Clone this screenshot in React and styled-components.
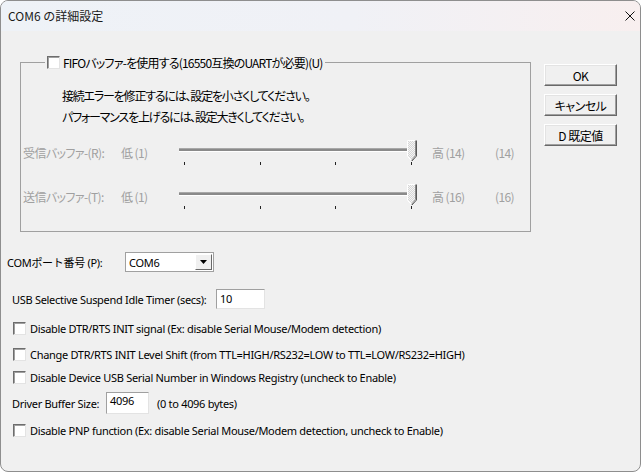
import React from "react";
import styled, { createGlobalStyle } from "styled-components";

const Global = createGlobalStyle`
  html, body { margin: 0; padding: 0; background: #ffffff; }
  body { width: 641px; height: 472px; overflow: hidden; }
`;

const UI = `"Noto Sans", "Noto Sans CJK JP", sans-serif`;
const JP = `"Noto Sans CJK JP", "Noto Sans", sans-serif`;

const Window = styled.div`
  box-sizing: border-box;
  width: 641px;
  height: 472px;
  border: 1px solid #8e8e8e;
  border-radius: 8px;
  overflow: hidden;
  background: #f0f0f0;
  display: flex;
  flex-direction: column;
  font-family: ${UI};
  font-size: 11px;
  letter-spacing: -0.3px;
  color: #000;
`;

const TitleBar = styled.div`
  flex: none;
  height: 30px;
  display: flex;
  align-items: center;
  justify-content: space-between;
  padding: 0 5px 0 7px;
  background: linear-gradient(90deg, #eef2f7 0%, #f0f1f6 55%, #f8efef 100%);
`;

const Title = styled.span`
  font-family: ${JP};
  font-size: 12px;
  letter-spacing: 0;
  line-height: 16px;
  color: #1a1a1a;
`;

const Body = styled.div`
  flex: 1;
  display: flex;
  flex-direction: column;
  padding-top: 25px;
`;

const TopRow = styled.div`
  display: flex;
  align-items: flex-start;
  padding-left: 19px;
`;

const GroupBox = styled.fieldset`
  box-sizing: border-box;
  width: 511px;
  margin: 0;
  padding: 0 0 3px 0;
  border: 1px solid #a0a0a0;
  min-inline-size: 0;
`;

const Legend = styled.legend`
  margin-left: 24px;
  padding: 0 2px;
  height: 13px;
  display: flex;
  align-items: center;
  gap: 3px;
  font-family: ${JP};
  font-feature-settings: "palt";
  font-size: 12px;
  letter-spacing: -0.8px;
  line-height: 13px;
`;

const Intro = styled.div`
  margin-top: 19px;
  padding-left: 41px;
  display: flex;
  flex-direction: column;
  gap: 5px;
  font-family: ${JP};
  font-feature-settings: "palt";
  font-size: 12px;
  letter-spacing: -1.2px;
  line-height: 16px;
`;

const SliderRow = styled.div`
  display: grid;
  grid-template-columns: 98px 58px 237px 16px 63px auto;
  height: 44px;
  padding-left: 2px;
  margin-top: ${(p) => p.$top || 0}px;
  font-family: ${JP};
  font-feature-settings: "palt";
  font-size: 12px;
  letter-spacing: -0.6px;
  line-height: 16px;
  color: #a0a0a0;
`;

const Dim = styled.span`
  padding-top: 5px;
  white-space: nowrap;
`;

const SliderBox = styled.div`
  position: relative;
  height: 26px;
`;

const Track = styled.div`
  margin-top: 8px;
  width: 232px;
  height: 2px;
  background: #8a8a8a;
  border-top: 1px solid #a8a8a8;
  border-bottom: 1px solid #ffffff;
`;

const Ticks = styled.div`
  display: flex;
  justify-content: space-between;
  width: 228px;
  margin: 10px 0 0 5px;
`;

const Tick = styled.span`
  width: 1px;
  height: 3px;
  background: #222;
`;

const Thumb = styled.svg`
  position: absolute;
  left: 228px;
  top: 0;
`;

const ButtonColumn = styled.div`
  margin: 8px 0 0 13px;
  display: flex;
  flex-direction: column;
  gap: 8px;
`;

const Button = styled.button`
  box-sizing: border-box;
  width: 73px;
  height: 22px;
  padding: 0;
  background: #f0f0f0;
  border: 1px solid;
  border-color: #ffffff #696969 #696969 #ffffff;
  box-shadow: inset -1px -1px 0 #a0a0a0, inset 1px 1px 0 #e3e3e3;
  font-family: ${JP};
  font-feature-settings: "palt";
  font-size: 12px;
  letter-spacing: -0.5px;
  color: #000;
`;

const FormRow = styled.div`
  display: flex;
  align-items: center;
  height: ${(p) => p.$h || 20}px;
  margin-top: ${(p) => p.$top || 0}px;
  padding-left: ${(p) => p.$left || 11}px;
  white-space: nowrap;
`;

const Label = styled.span`
  flex: none;
  width: ${(p) => (p.$w ? `${p.$w}px` : "auto")};
`;

const Select = styled.div`
  box-sizing: border-box;
  width: 89px;
  height: 20px;
  display: flex;
  align-items: center;
  background: #fff;
  border: 1px solid #a0a0a0;
  padding: 1px;
`;

const SelectValue = styled.span`
  flex: 1;
  padding-left: 2px;
`;

const DropButton = styled.span`
  box-sizing: border-box;
  width: 17px;
  height: 16px;
  display: flex;
  align-items: center;
  justify-content: center;
  background: #f0f0f0;
  border: 1px solid;
  border-color: #ffffff #696969 #696969 #ffffff;
`;

const TextBox = styled.div`
  box-sizing: border-box;
  flex: none;
  width: ${(p) => p.$w}px;
  height: ${(p) => p.$h || 20}px;
  background: #fff;
  border: 1px solid;
  border-color: #a0a0a0 #e3e3e3 #e3e3e3 #a0a0a0;
  padding: ${(p) => (p.$tight ? "0 3px" : "1px 3px")};
  line-height: 16px;
`;

const Box = styled.span`
  box-sizing: border-box;
  flex: none;
  width: 13px;
  height: 13px;
  background: #fff;
  border: 1px solid;
  border-color: #6d6d6d #e3e3e3 #e3e3e3 #6d6d6d;
  box-shadow: inset 1px 1px 0 #a0a0a0;
`;

const CheckRow = styled(FormRow)`
  gap: 4px;
`;

const Note = styled.span`
  margin-left: 8px;
`;

function CheckBox() {
  return <Box />;
}

function Slider() {
  return (
    <SliderBox>
      <Track />
      <Ticks>
        <Tick />
        <Tick />
        <Tick />
        <Tick />
      </Ticks>
      <Thumb width="10" height="22" viewBox="0 0 10 22">
        <defs>
          <pattern id="dots" width="2" height="2" patternUnits="userSpaceOnUse">
            <rect width="2" height="2" fill="#f4f4f4" />
            <rect width="1" height="1" fill="#d6d6d6" />
            <rect x="1" y="1" width="1" height="1" fill="#d6d6d6" />
          </pattern>
        </defs>
        <path d="M0.5 0.5 H8.5 V15.5 L4.5 20.5 L0.5 16.5 Z" fill="url(#dots)" stroke="#ffffff" />
        <path d="M8.5 0.5 V15.5 L4.5 20.5" fill="none" stroke="#8a8a8a" />
        <path d="M9.5 0.5 V16 L5 21" fill="none" stroke="#5a5a5a" />
      </Thumb>
    </SliderBox>
  );
}

export default function App() {
  return (
    <>
      <Global />
      <Window>
        <TitleBar>
          <Title>COM6 の詳細設定</Title>
          <svg width="10" height="10" viewBox="0 0 10 10">
            <path d="M0.5 0.5 L9.5 9.5 M9.5 0.5 L0.5 9.5" stroke="#111" strokeWidth="1" />
          </svg>
        </TitleBar>
        <Body>
          <TopRow>
            <GroupBox>
              <Legend>
                <CheckBox />
                <span>FIFOバッファ-を使用する(16550互換のUARTが必要)(U)</span>
              </Legend>
              <Intro>
                <span>接続エラーを修正するには、設定を小さくしてください。</span>
                <span>パフォーマンスを上げるには、設定大きくしてください。</span>
              </Intro>
              <SliderRow $top={15}>
                <Dim>受信バッファ-(R):</Dim>
                <Dim>低 (1)</Dim>
                <Slider />
                <span />
                <Dim>高 (14)</Dim>
                <Dim>(14)</Dim>
              </SliderRow>
              <SliderRow>
                <Dim>送信バッファ-(T):</Dim>
                <Dim>低 (1)</Dim>
                <Slider />
                <span />
                <Dim>高 (16)</Dim>
                <Dim>(16)</Dim>
              </SliderRow>
            </GroupBox>
            <ButtonColumn>
              <Button>OK</Button>
              <Button>キャンセル</Button>
              <Button>D 既定値</Button>
            </ButtonColumn>
          </TopRow>

          <FormRow $top={20} $left={6}>
            <Label $w={118}>COMポート番号 (P):</Label>
            <Select>
              <SelectValue>COM6</SelectValue>
              <DropButton>
                <svg width="7" height="4" viewBox="0 0 7 4">
                  <path d="M0 0 H7 L3.5 4 Z" fill="#000" />
                </svg>
              </DropButton>
            </Select>
          </FormRow>

          <FormRow $top={17}>
            <Label $w={204}>USB Selective Suspend Idle Timer (secs):</Label>
            <TextBox $w={49}>10</TextBox>
          </FormRow>

          <CheckRow $top={13} $h={13} $left={12}>
            <CheckBox />
            <span>Disable DTR/RTS INIT signal (Ex: disable Serial Mouse/Modem detection)</span>
          </CheckRow>

          <CheckRow $top={13} $h={13} $left={12}>
            <CheckBox />
            <span>Change DTR/RTS INIT Level Shift (from TTL=HIGH/RS232=LOW to TTL=LOW/RS232=HIGH)</span>
          </CheckRow>

          <CheckRow $top={10} $h={13} $left={12}>
            <CheckBox />
            <span>Disable Device USB Serial Number in Windows Registry (uncheck to Enable)</span>
          </CheckRow>

          <FormRow $top={8} $h={22}>
            <Label $w={94}>Driver Buffer Size:</Label>
            <TextBox $w={43} $h={22} $tight>4096</TextBox>
            <Note>(0 to 4096 bytes)</Note>
          </FormRow>

          <CheckRow $top={10} $h={13} $left={12}>
            <CheckBox />
            <span>Disable PNP function (Ex: disable Serial Mouse/Modem detection, uncheck to Enable)</span>
          </CheckRow>
        </Body>
      </Window>
    </>
  );
}
